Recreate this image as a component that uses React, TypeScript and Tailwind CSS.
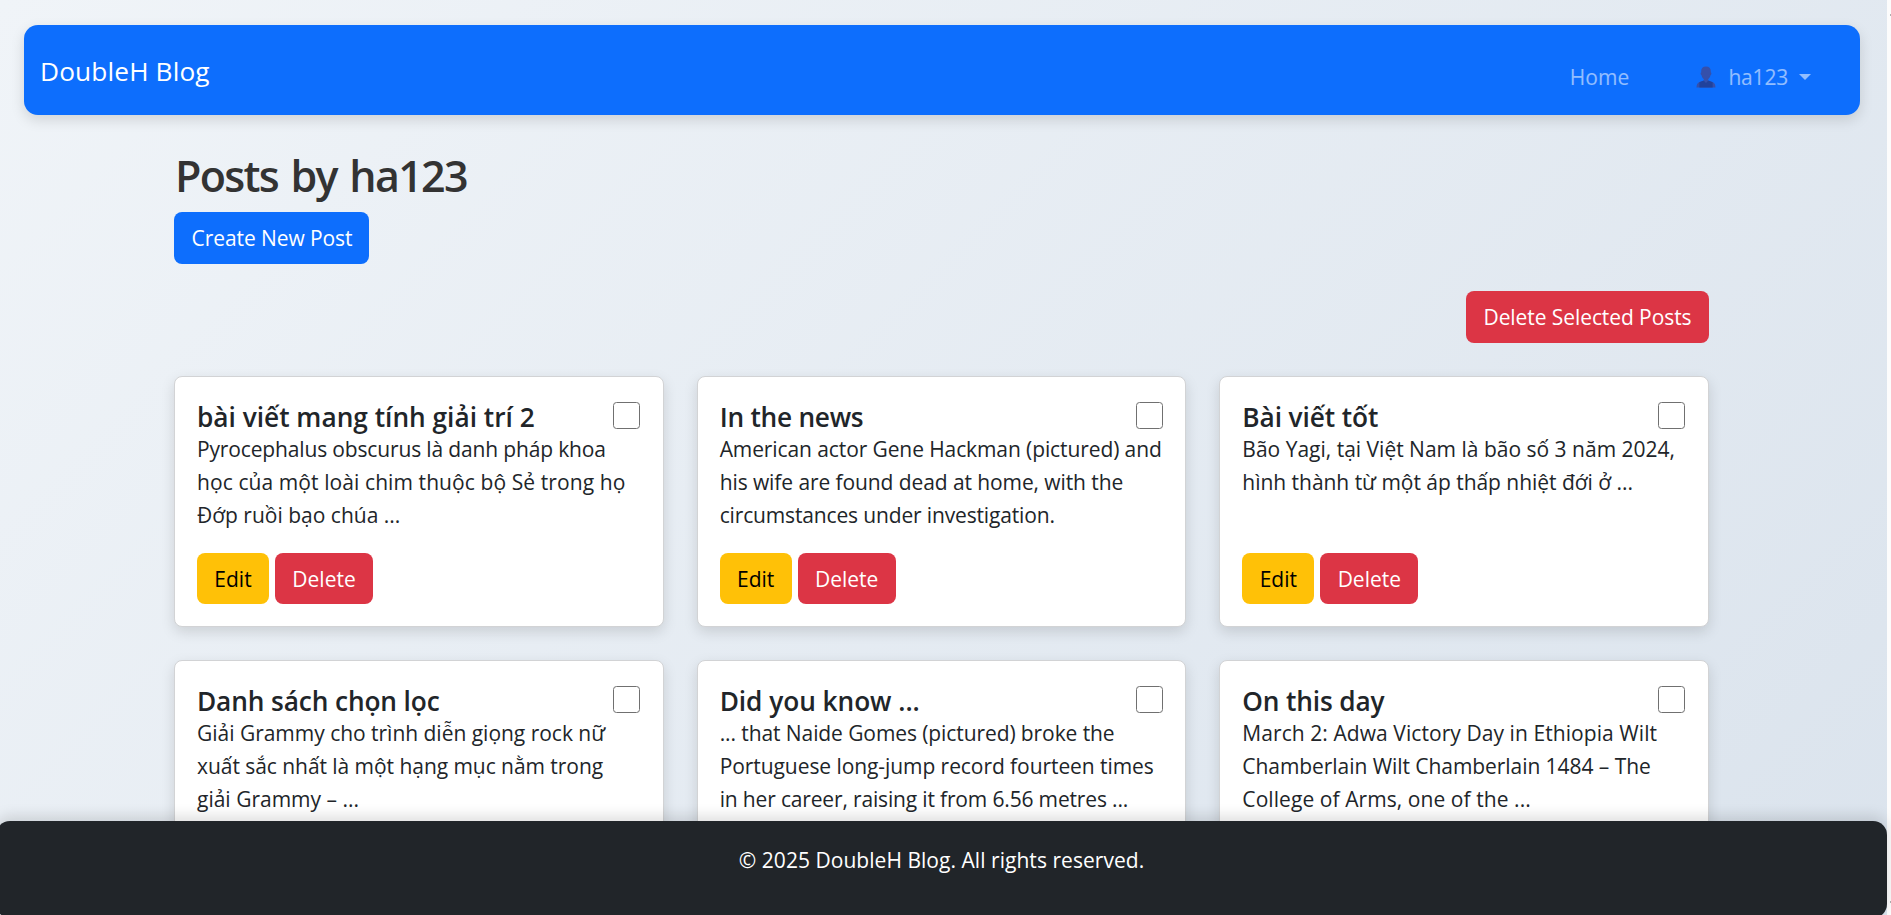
type Line = { text: string; track?: string };
type Post = { title: string; track?: string; lines: Line[] };

const posts: Post[] = [
  {
    title: "bài viết mang tính giải trí 2",
    lines: [
      { text: "Pyrocephalus obscurus là danh pháp khoa", track: "tracking-[-0.15px]" },
      { text: "học của một loài chim thuộc bộ Sẻ trong họ", track: "tracking-[0.09px]" },
      { text: "Đớp ruồi bạo chúa ..." },
    ],
  },
  {
    title: "In the news",
    track: "tracking-[-0.25px]",
    lines: [
      { text: "American actor Gene Hackman (pictured) and", track: "tracking-[-0.1px]" },
      { text: "his wife are found dead at home, with the", track: "tracking-[-0.09px]" },
      { text: "circumstances under investigation.", track: "tracking-[-0.15px]" },
    ],
  },
  {
    title: "Bài viết tốt",
    track: "tracking-[-0.1px]",
    lines: [
      { text: "Bão Yagi, tại Việt Nam là bão số 3 năm 2024," },
      { text: "hình thành từ một áp thấp nhiệt đới ở ...", track: "tracking-[-0.03px]" },
    ],
  },
  {
    title: "Danh sách chọn lọc",
    track: "tracking-[-0.12px]",
    lines: [
      { text: "Giải Grammy cho trình diễn giọng rock nữ", track: "tracking-[-0.02px]" },
      { text: "xuất sắc nhất là một hạng mục nằm trong", track: "tracking-[-0.05px]" },
      { text: "giải Grammy – ..." },
    ],
  },
  {
    title: "Did you know ...",
    track: "tracking-[-0.05px]",
    lines: [
      { text: "... that Naide Gomes (pictured) broke the", track: "tracking-[-0.09px]" },
      { text: "Portuguese long-jump record fourteen times", track: "tracking-[-0.07px]" },
      { text: "in her career, raising it from 6.56 metres ...", track: "tracking-[-0.16px]" },
    ],
  },
  {
    title: "On this day",
    track: "tracking-[-0.15px]",
    lines: [
      { text: "March 2: Adwa Victory Day in Ethiopia Wilt", track: "tracking-[0.07px]" },
      { text: "Chamberlain Wilt Chamberlain 1484 – The", track: "tracking-[-0.06px]" },
      { text: "College of Arms, one of the ...", track: "tracking-[0.07px]" },
    ],
  },
];

function UserIcon() {
  return (
    <svg width="20" height="22" viewBox="0 0 20 22" className="mr-[12px]">
      <path d="M10 0.5c3.2 0 4.8 2 4.8 4.8v1.2c.9 0 .8 2.2-.2 2.6-.4 1.9-1.3 3.2-2.4 4.1v1.6l4.2 1.3c2 .7 2.9 2.3 3.1 5.4H.5c.2-3.1 1.1-4.7 3.1-5.4l4.2-1.3v-1.6c-1.1-.9-2-2.2-2.4-4.1-1-.4-1.1-2.6-.2-2.6V5.3C5.2 2.5 6.8.5 10 .5z" fill="#3550ab" />
      <path d="M3.4 16.2 7.6 14.6 10 17l2.4-2.4 4.2 1.6v5.3H3.4z" fill="#20429c" />
    </svg>
  );
}

function Card({ post }: { post: Post }) {
  return (
    <article className="flex h-[251px] flex-col items-start rounded-[8px] border border-[#d2d3d5] bg-white p-[22px] text-[#212529] shadow-[0_5px_14px_rgba(0,0,0,0.13)]">
      <div className="flex h-[34px] w-full items-start justify-between">
        <h5 className={`pt-[2px] text-[26.25px] leading-[33px] font-semibold whitespace-nowrap ${post.track ?? ""}`}>{post.title}</h5>
        <span className="mt-[2.5px] mr-[0.5px] h-[27px] w-[27px] shrink-0 rounded-[3.5px] border border-[#707070] bg-white" />
      </div>
      <p className="mb-[21px] h-[99px] whitespace-nowrap">
        {post.lines.map((line) => (
          <span key={line.text} className={`block ${line.track ?? ""}`}>{line.text}</span>
        ))}
      </p>
      <div className="flex gap-[6px]">
        <button className="h-[51px] w-[72px] rounded-[8px] bg-[#ffc107] pt-px text-black">Edit</button>
        <button className="h-[51px] w-[98px] rounded-[8px] bg-[#dc3545] pt-px text-white">Delete</button>
      </div>
    </article>
  );
}

export default function App() {
  return (
    <div className="flex h-[915px] w-[1891px] overflow-hidden font-['Open_Sans','Noto_Sans',sans-serif] text-[21px] leading-[33px]">
      <div className="relative h-full w-[1887px] shrink-0 bg-[linear-gradient(135deg,#f0f4f8_0%,#d9e2ec_108%)]">
        <nav className="mt-[25px] mr-[27px] ml-[24px] flex h-[90px] items-center justify-between rounded-[14px] bg-[#0d6efd] pr-[48px] pl-[16px] shadow-[0_5px_14px_rgba(0,0,0,0.13)]">
          <span className="pt-[2px] text-[26.25px] tracking-[0.13px] text-white">DoubleH Blog</span>
          <div className="flex items-center pt-[14px] text-white/55">
            <span className="mr-[67px] tracking-[0.1px]">Home</span>
            <UserIcon />
            <span className="tracking-[-0.2px]">ha123</span>
            <span className="mr-px ml-[11px] border-x-[6px] border-t-[6px] border-x-transparent border-t-white/55" />
          </div>
        </nav>

        <main className="mr-[178px] ml-[174px]">
          <h2 className="mt-[34px] h-[53px] pl-px text-[43px] leading-[53px] font-semibold tracking-[-1.7px] text-[#333] [word-spacing:3px]">Posts by ha123</h2>
          <button className="mt-[10px] block h-[52px] w-[195px] rounded-[8px] bg-[#0d6efd] pl-px tracking-[-0.08px] text-white">Create New Post</button>
          <div className="mt-[27px] flex justify-end">
            <button className="h-[52px] w-[243px] rounded-[8px] bg-[#dc3545] tracking-[-0.08px] text-white">Delete Selected Posts</button>
          </div>
          <section className="mt-[33px] grid grid-cols-3 gap-[33px]">
            {posts.map((post) => (
              <Card key={post.title} post={post} />
            ))}
          </section>
        </main>

        <footer className="absolute top-[821px] right-0 -left-[4px] h-[97px] rounded-[14px] bg-[#212529] pt-[23px] text-center tracking-[0.04px] text-white shadow-[0_-5px_14px_rgba(0,0,0,0.13)]">
          © 2025 DoubleH Blog. All rights reserved.
        </footer>
      </div>
      <div className="flex w-[4px] flex-col items-end justify-between bg-[#fcfcfc] pt-[14px] pb-[12px]">
        <span className="h-[2px] w-px bg-[#b0b0b0]" />
        <span className="h-[2px] w-px bg-[#b0b0b0]" />
      </div>
    </div>
  );
}
